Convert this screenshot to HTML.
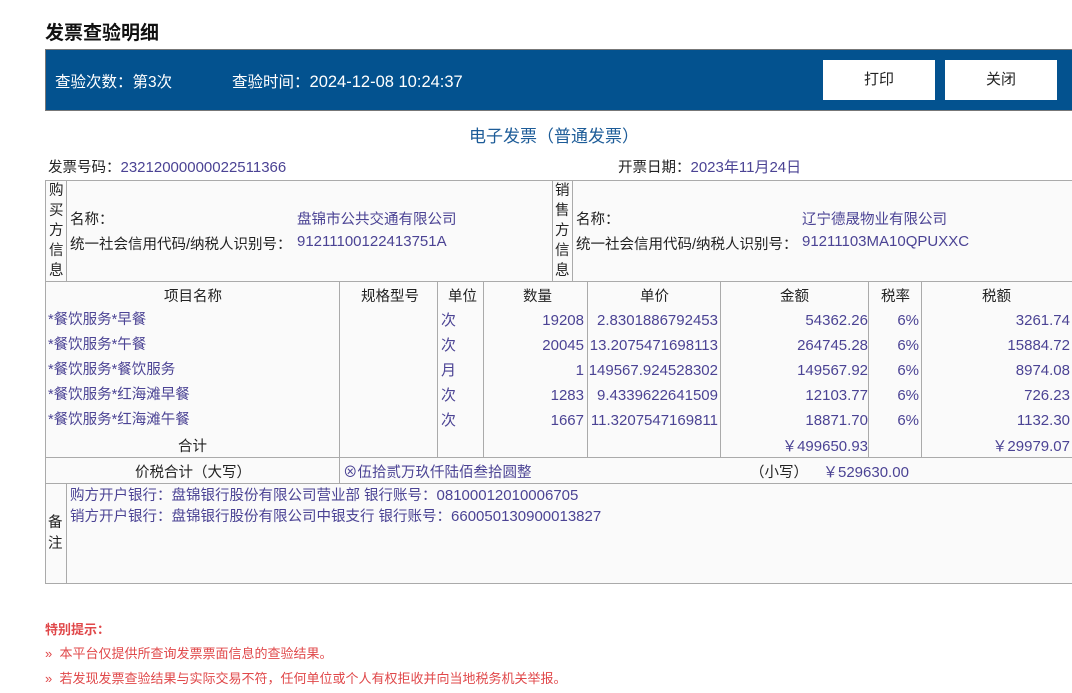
<!DOCTYPE html>
<html><head><meta charset="utf-8"><style>
*{margin:0;padding:0;box-sizing:border-box}
body{width:1072px;height:693px;overflow:hidden;background:#fff;font-family:"Liberation Sans","Noto Sans CJK SC",sans-serif;font-size:14.5px;color:#222;position:relative}
.a{position:absolute;white-space:nowrap}
.v{color:#4b4394}
.n{font-size:15px}
.wm{position:absolute;color:#f2f2f2;font-size:26px;transform:rotate(-30deg);white-space:nowrap}
.l{position:absolute;background:#aaa}
.h{height:1px}.w{width:1px}
</style></head><body>
<div class="wm" style="left:360px;top:250px">国家税务总局</div>
<div class="wm" style="left:900px;top:300px">国家税务总局</div>
<div class="wm" style="left:40px;top:330px">国家税务总局</div>
<div class="wm" style="left:560px;top:460px">国家税务总局</div>
<div class="wm" style="left:180px;top:500px">国家税务总局</div>

<div class="a" style="left:45px;top:18px;font-size:19px;font-weight:bold;color:#111">发票查验明细</div>
<div class="a" style="left:45px;top:49px;width:1040px;height:62px;background:#03528f;border:1px solid #777"></div>
<div class="a" style="left:55px;top:70px;color:#fff;font-size:15.5px">查验次数：第3次</div>
<div class="a" style="left:232px;top:70px;color:#fff;font-size:15.5px">查验时间：<span style="font-size:16.5px">2024-12-08 10:24:37</span></div>
<div class="a" style="left:823px;top:60px;width:112px;height:40px;background:#fff;text-align:center;line-height:40px;font-size:15px">打印</div>
<div class="a" style="left:945px;top:60px;width:112px;height:40px;background:#fff;text-align:center;line-height:40px;font-size:15px">关闭</div>

<div class="a" style="left:469px;top:122px;font-size:17px;color:#1d5c98">电子发票（普通发票）</div>
<div class="a" style="left:48px;top:156px">发票号码：<span class="v n">23212000000022511366</span></div>
<div class="a" style="left:618px;top:156px">开票日期：<span class="v n">2023年11月24日</span></div>

<div class="a" style="left:45px;top:180px;width:1040px;height:403px;background:#fafafa"></div>
<div class="l h" style="left:45px;top:180px;width:1030px"></div>
<div class="l h" style="left:45px;top:281px;width:1030px"></div>
<div class="l h" style="left:45px;top:457px;width:1030px"></div>
<div class="l h" style="left:45px;top:483px;width:1030px"></div>
<div class="l h" style="left:45px;top:583px;width:1030px"></div>
<div class="l w" style="left:45px;top:180px;height:404px"></div>
<div class="l w" style="left:66px;top:180px;height:101px"></div>
<div class="l w" style="left:552px;top:180px;height:101px"></div>
<div class="l w" style="left:572px;top:180px;height:101px"></div>
<div class="l w" style="left:339px;top:281px;height:202px"></div>
<div class="l w" style="left:437px;top:281px;height:176px"></div>
<div class="l w" style="left:483px;top:281px;height:176px"></div>
<div class="l w" style="left:587px;top:281px;height:176px"></div>
<div class="l w" style="left:720px;top:281px;height:176px"></div>
<div class="l w" style="left:868px;top:281px;height:176px"></div>
<div class="l w" style="left:921px;top:281px;height:176px"></div>
<div class="l w" style="left:66px;top:483px;height:100px"></div>

<div class="a" style="left:49px;top:181px;width:14px;white-space:normal;line-height:20px">购买方信息</div>
<div class="a" style="left:70px;top:208px">名称：</div>
<div class="a v" style="left:297px;top:208px">盘锦市公共交通有限公司</div>
<div class="a" style="left:70px;top:233px">统一社会信用代码/纳税人识别号：</div>
<div class="a v n" style="left:297px;top:233px">91211100122413751A</div>
<div class="a" style="left:555px;top:181px;width:14px;white-space:normal;line-height:20px">销售方信息</div>
<div class="a" style="left:576px;top:208px">名称：</div>
<div class="a v" style="left:802px;top:208px">辽宁德晟物业有限公司</div>
<div class="a" style="left:576px;top:233px">统一社会信用代码/纳税人识别号：</div>
<div class="a v n" style="left:802px;top:233px">91211103MA10QPUXXC</div>

<div class="a" style="left:164px;top:285px">项目名称</div>
<div class="a" style="left:361px;top:285px">规格型号</div>
<div class="a" style="left:448px;top:285px">单位</div>
<div class="a" style="left:523px;top:285px">数量</div>
<div class="a" style="left:640px;top:285px">单价</div>
<div class="a" style="left:780px;top:285px">金额</div>
<div class="a" style="left:881px;top:285px">税率</div>
<div class="a" style="left:982px;top:285px">税额</div>

<div style="position:absolute;left:0;top:308px;width:1072px;line-height:25px" class="v">
<div style="position:relative;height:25px" class="n"><span class="a" style="left:48px;font-size:14.5px">*餐饮服务*早餐</span><span class="a" style="left:441px">次</span><span class="a" style="right:488px">19208</span><span class="a" style="right:354px">2.8301886792453</span><span class="a" style="right:204px">54362.26</span><span class="a" style="right:153px">6%</span><span class="a" style="right:2px">3261.74</span></div>
<div style="position:relative;height:25px" class="n"><span class="a" style="left:48px;font-size:14.5px">*餐饮服务*午餐</span><span class="a" style="left:441px">次</span><span class="a" style="right:488px">20045</span><span class="a" style="right:354px">13.2075471698113</span><span class="a" style="right:204px">264745.28</span><span class="a" style="right:153px">6%</span><span class="a" style="right:2px">15884.72</span></div>
<div style="position:relative;height:25px" class="n"><span class="a" style="left:48px;font-size:14.5px">*餐饮服务*餐饮服务</span><span class="a" style="left:441px">月</span><span class="a" style="right:488px">1</span><span class="a" style="right:354px">149567.924528302</span><span class="a" style="right:204px">149567.92</span><span class="a" style="right:153px">6%</span><span class="a" style="right:2px">8974.08</span></div>
<div style="position:relative;height:25px" class="n"><span class="a" style="left:48px;font-size:14.5px">*餐饮服务*红海滩早餐</span><span class="a" style="left:441px">次</span><span class="a" style="right:488px">1283</span><span class="a" style="right:354px">9.4339622641509</span><span class="a" style="right:204px">12103.77</span><span class="a" style="right:153px">6%</span><span class="a" style="right:2px">726.23</span></div>
<div style="position:relative;height:25px" class="n"><span class="a" style="left:48px;font-size:14.5px">*餐饮服务*红海滩午餐</span><span class="a" style="left:441px">次</span><span class="a" style="right:488px">1667</span><span class="a" style="right:354px">11.3207547169811</span><span class="a" style="right:204px">18871.70</span><span class="a" style="right:153px">6%</span><span class="a" style="right:2px">1132.30</span></div>
</div>
<div class="a" style="left:178px;top:435px">合计</div>
<div class="a v n" style="right:204px;top:435px">￥499650.93</div>
<div class="a v n" style="right:2px;top:435px">￥29979.07</div>

<div class="a" style="left:135px;top:461px">价税合计（大写）</div>
<div class="a v" style="left:343px;top:461px">⊗伍拾贰万玖仟陆佰叁拾圆整</div>
<div class="a" style="left:750px;top:461px">（小写）</div>
<div class="a v n" style="left:823px;top:461px">￥529630.00</div>

<div class="a" style="left:48px;top:513px;width:14px;white-space:normal;line-height:21px">备注</div>
<div class="a v" style="left:70px;top:484px">购方开户银行：盘锦银行股份有限公司营业部 银行账号：<span class="n">08100012010006705</span></div>
<div class="a v" style="left:70px;top:505px">销方开户银行：盘锦银行股份有限公司中银支行 银行账号：<span class="n">660050130900013827</span></div>

<div class="a" style="left:45px;top:619px;font-size:13px;font-weight:bold;color:#e0484a">特别提示：</div>
<div class="a" style="left:45px;top:643px;font-size:13px;color:#e0484a">»&nbsp;&nbsp;本平台仅提供所查询发票票面信息的查验结果。</div>
<div class="a" style="left:45px;top:668px;font-size:13px;color:#e0484a">»&nbsp;&nbsp;若发现发票查验结果与实际交易不符，任何单位或个人有权拒收并向当地税务机关举报。</div>
</body></html>
